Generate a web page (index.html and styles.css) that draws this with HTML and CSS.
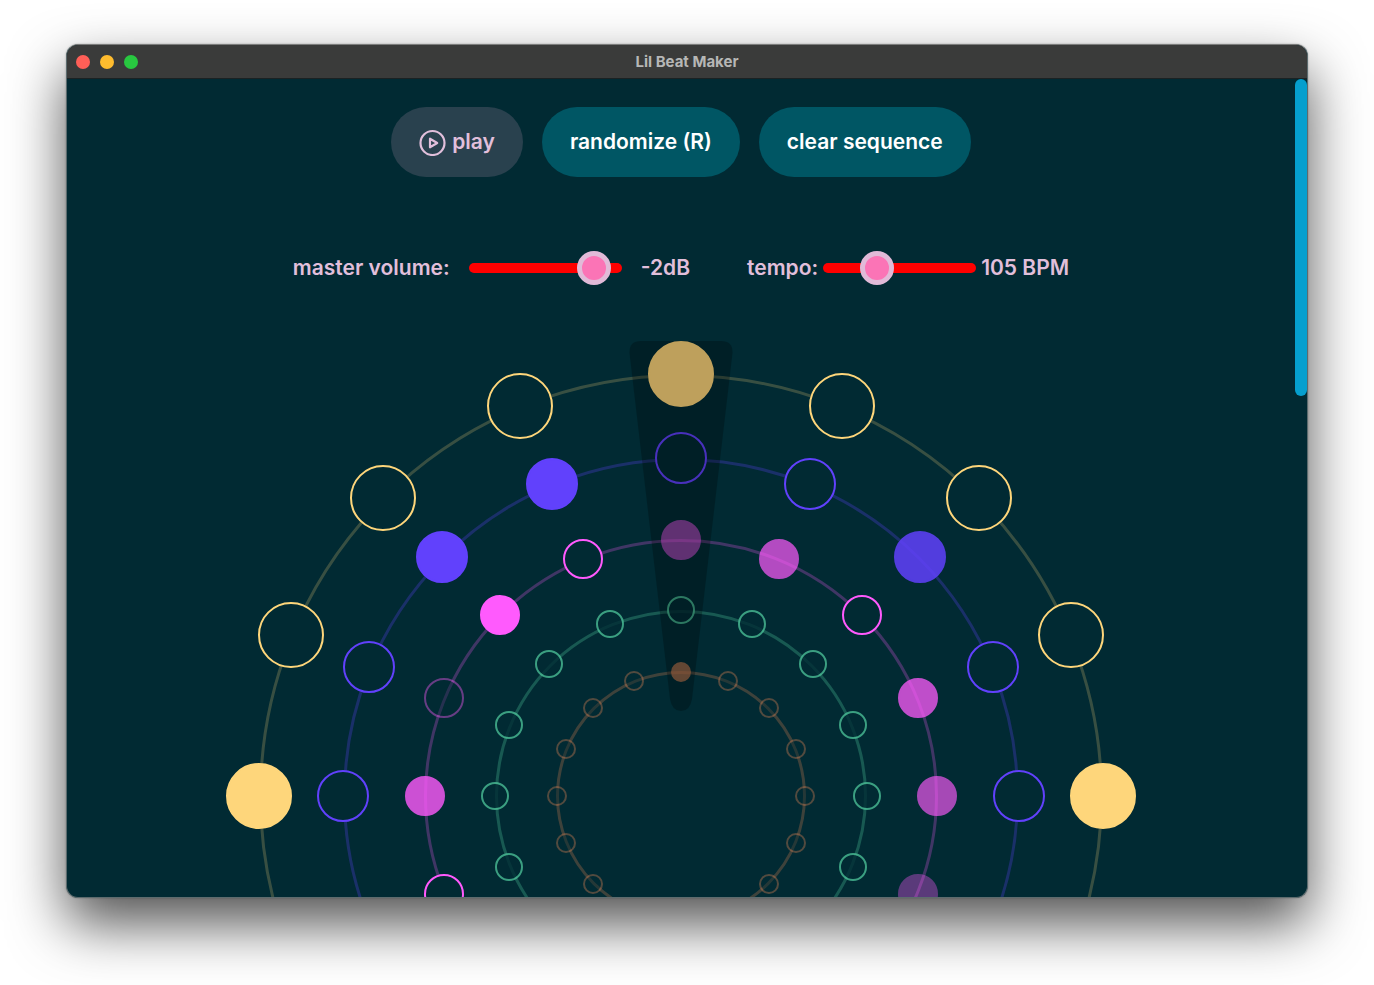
FILE: index.html
```html
<!DOCTYPE html>
<html lang="en">
<head>
    <meta charset="UTF-8">
    <meta name="viewport" content="width=device-width, initial-scale=1.0">
    <title>Lil Beat Maker</title>
    <link rel="stylesheet" href="styles.css">
</head>
<body>
    <div class="window">
        <header class="titlebar">
            <div class="lights">
                <button class="light close" aria-label="Close"></button>
                <button class="light minimize" aria-label="Minimize"></button>
                <button class="light maximize" aria-label="Maximize"></button>
            </div>
            <h1>Lil Beat Maker</h1>
        </header>

        <div class="view">
            <main class="content" id="content">
                <div class="buttons">
                    <button class="btn play" id="play">
                        <svg width="27" height="27" viewBox="0 0 27 27" fill="none" stroke="currentColor" stroke-width="2.200" stroke-linejoin="round" aria-hidden="true">
                            <circle cx="13.5" cy="14" r="12" />
                            <path d="M11 9.7v8.6l7.2-4.3z" />
                        </svg>
                        <span>play</span>
                    </button>
                    <button class="btn" id="randomize">randomize (R)</button>
                    <button class="btn" id="clear">clear sequence</button>
                </div>

                <div class="sliders">
                    <div class="slider volume">
                        <label for="volume">master volume:</label>
                        <input type="range" id="volume" min="-60" max="4" value="-2">
                        <output for="volume" id="volume-value">-2dB</output>
                    </div>
                    <div class="slider tempo">
                        <label for="tempo">tempo:</label>
                        <input type="range" id="tempo" min="60" max="205" value="105">
                        <output for="tempo" id="tempo-value">105 BPM</output>
                    </div>
                </div>

                <div class="sequencer" id="sequencer">
                    <svg class="playhead" width="104" height="371" viewBox="0 0 104 371" aria-hidden="true">
                        <path d="M12 0H92Q104 0 103.500 12L63 358Q61 370 52 370Q43 370 41 358L0.500 12Q0 0 12 0Z" />
                    </svg>
                </div>
            </main>
            <div class="scrollbar">
                <div class="thumb" id="thumb"></div>
            </div>
        </div>
    </div>

    <script>
        const STEPS = 16;
        const DIM = 0.4;

        // on: active steps, clockwise from the top. velocity: opacity of single steps
        const tracks = [
            { name: 'yellow', radius: 422, on: [0, 4, 12], level: 1, velocity: {} },
            { name: 'purple', radius: 338, on: [2, 14, 15], level: 1, velocity: { 2: 0.85 } },
            { name: 'pink', radius: 256, on: [0, 1, 3, 4, 5, 12, 14], level: 1, velocity: { 0: 0.5, 1: 0.7, 3: 0.75, 4: 0.65, 5: 0.35, 12: 0.8, 13: DIM } },
            { name: 'green', radius: 186, on: [], level: 0.75, velocity: {} },
            { name: 'orange', radius: 124, on: [0], level: DIM, velocity: { 0: 0.65 } }
        ];

        const sequencer = document.getElementById('sequencer');
        const playhead = sequencer.querySelector('.playhead');

        tracks.forEach(track => {
            const ring = document.createElement('div');
            ring.className = `ring ${track.name}`;
            sequencer.insertBefore(ring, playhead);

            for (let i = 0; i < STEPS; i++) {
                const angle = i / STEPS * Math.PI * 2;
                const step = document.createElement('button');
                step.className = `step ${track.name}`;
                step.classList.toggle('on', track.on.includes(i));
                step.setAttribute('aria-label', `${track.name} step ${i + 1}`);
                step.style.left = `calc(50% + ${Math.round(Math.sin(angle) * track.radius)}px)`;
                step.style.top = `calc(50% - ${Math.round(Math.cos(angle) * track.radius)}px)`;
                step.style.opacity = track.velocity[i] || track.level;
                step.addEventListener('click', () => step.classList.toggle('on'));
                sequencer.insertBefore(step, playhead);
            }
        });

        const steps = document.querySelectorAll('.step');

        function randomize() {
            steps.forEach(step => step.classList.toggle('on', Math.random() < 0.3));
        }

        document.getElementById('randomize').addEventListener('click', randomize);
        document.getElementById('clear').addEventListener('click', () => {
            steps.forEach(step => step.classList.remove('on'));
        });
        document.addEventListener('keydown', e => {
            if (e.key.toLowerCase() === 'r') randomize();
        });

        document.getElementById('volume').addEventListener('input', e => {
            document.getElementById('volume-value').textContent = `${e.target.value}dB`;
        });
        document.getElementById('tempo').addEventListener('input', e => {
            document.getElementById('tempo-value').textContent = `${e.target.value} BPM`;
        });

        // scrollbar thumb follows the content
        const content = document.getElementById('content');
        const thumb = document.getElementById('thumb');

        function updateThumb() {
            const { clientHeight, scrollHeight, scrollTop } = content;
            thumb.style.height = `${clientHeight / scrollHeight * 100}%`;
            thumb.style.marginTop = `${Math.round(scrollTop / scrollHeight * clientHeight)}px`;
        }

        content.addEventListener('scroll', updateThumb);
        window.addEventListener('resize', updateThumb);
        updateThumb();
    </script>
</body>
</html>
```
FILE: styles.css
```css
* {
    box-sizing: border-box;
}

body {
    margin: 0;
    padding: 44px 66px 87px;
    height: 100vh;
    background: #fff;
    font-family: Inter, "Liberation Sans", sans-serif;
    overflow: hidden;
}

.window {
    display: flex;
    flex-direction: column;
    height: 100%;
    border: 1px solid #5c6b6e;
    border-top-color: #7c7d7c;
    border-radius: 12px;
    background: #012a33;
    box-shadow: 0 26px 56px rgba(0, 0, 0, 0.68), 0 0 2px rgba(0, 0, 0, 0.3);
    overflow: hidden;
}

/* title bar */
.titlebar {
    display: grid;
    grid-template-columns: 1fr auto 1fr;
    align-items: center;
    flex: none;
    height: 34px;
    padding: 0 9px;
    background: #3a3b3a;
    border-bottom: 1px solid #1b2223;
}

.titlebar h1 {
    margin: 0;
    font-size: 15px;
    font-weight: 700;
    line-height: 20px;
    color: #b6b7b6;
}

.lights {
    display: flex;
    gap: 10px;
}

.light {
    width: 14px;
    height: 14px;
    padding: 0;
    border: none;
    border-radius: 50%;
}

.close {
    background: #ff5f57;
}

.minimize {
    background: #febc2e;
}

.maximize {
    background: #28c840;
}

/* scrolling page */
.view {
    display: flex;
    flex: 1;
    min-height: 0;
}

.content {
    flex: 1;
    min-width: 0;
    padding-top: 28px;
    overflow-x: hidden;
    overflow-y: auto;
    scrollbar-width: none;
    color: #e1bfdb;
    font-size: 21px;
    font-weight: 600;
    line-height: 26px;
}

.content::after {
    content: "";
    display: block;
    height: 970px;
}

.scrollbar {
    flex: none;
    width: 12px;
}

.thumb {
    background: #059fce;
    border-radius: 6px;
}

.buttons {
    display: flex;
    justify-content: center;
    gap: 19px;
    margin-bottom: 74px;
}

.btn {
    display: flex;
    align-items: center;
    gap: 6px;
    height: 70px;
    padding: 0 28px;
    border: none;
    border-radius: 35px;
    background: #005664;
    color: #fff;
    font: inherit;
    cursor: pointer;
}

.btn.play {
    background: #29414e;
    color: #e1bfdb;
}

.sliders {
    display: flex;
    justify-content: center;
    gap: 57px;
    margin-bottom: 89px;
}

.slider {
    display: flex;
    align-items: center;
    gap: 5px;
    height: 34px;
}

.slider.volume {
    gap: 19px;
}

input[type="range"] {
    -webkit-appearance: none;
    appearance: none;
    width: 153px;
    height: 10px;
    margin: 0;
    background: #f00;
    border-radius: 5px;
}

input[type="range"]::-webkit-slider-thumb {
    -webkit-appearance: none;
    width: 34px;
    height: 34px;
    border: 5px solid #e1bad8;
    border-radius: 50%;
    background: #fb74b6;
    cursor: pointer;
}

/* circular sequencer, steps are placed around the centre */
.sequencer {
    position: relative;
    width: 844px;
    height: 844px;
    margin: 0 auto;
}

.yellow {
    --color: #fed67b;
    --size: 66px;
    --ring: 844px;
    --line: 0.22;
}

.purple {
    --color: #6141fc;
    --size: 52px;
    --ring: 676px;
    --line: 0.27;
}

.pink {
    --color: #ff5afd;
    --size: 40px;
    --ring: 514px;
    --line: 0.25;
}

.green {
    --color: #4fc79c;
    --size: 28px;
    --ring: 372px;
    --line: 0.3;
}

.orange {
    --color: #cc7c51;
    --size: 20px;
    --ring: 250px;
    --line: 0.3;
}

.ring,
.step {
    position: absolute;
    border-radius: 50%;
    transform: translate(-50%, -50%);
}

.ring {
    top: 50%;
    left: 50%;
    width: var(--ring);
    height: var(--ring);
    border: 3px solid var(--color);
    opacity: var(--line);
    pointer-events: none;
}

.step {
    width: var(--size);
    height: var(--size);
    padding: 0;
    border: 2px solid var(--color);
    background: #012a33;
    cursor: pointer;
}

.step.on {
    background: var(--color);
}

.playhead {
    position: absolute;
    top: -33px;
    left: calc(50% - 52px);
    fill: rgba(0, 0, 0, 0.25);
    pointer-events: none;
}
```
